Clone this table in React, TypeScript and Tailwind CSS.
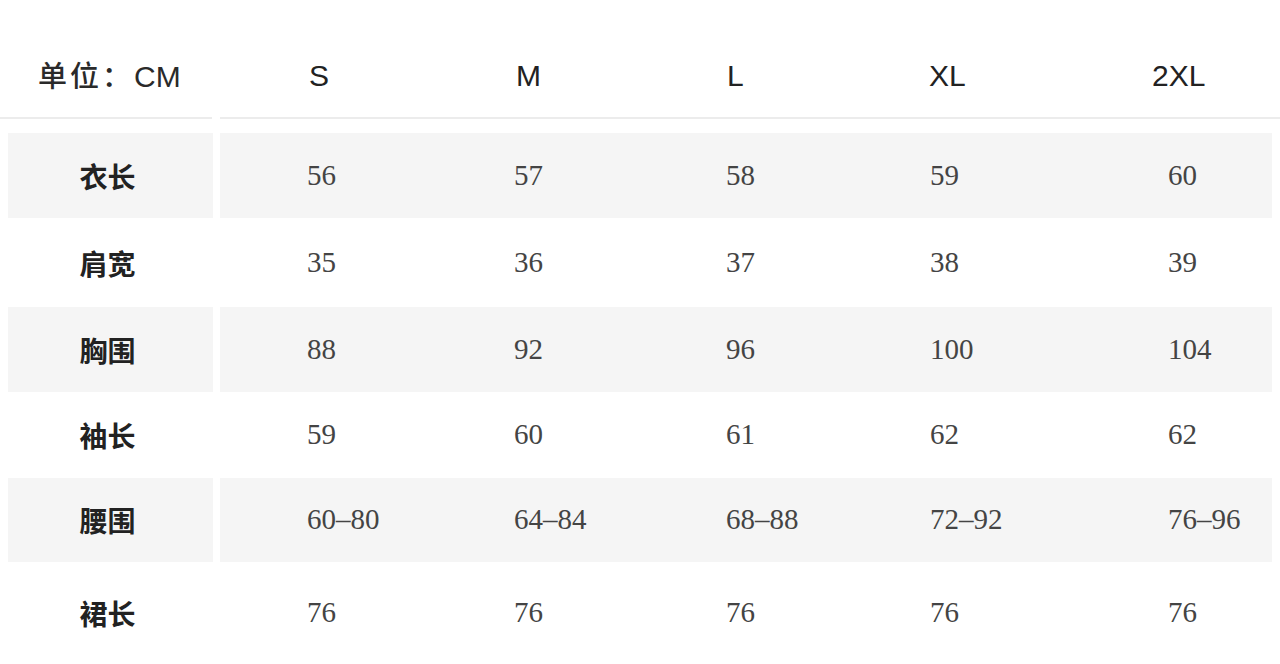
const sizes = ['S', 'M', 'L', 'XL', '2XL']

const rows: { label: string; values: string[]; h: string; shaded: boolean }[] = [
  { label: '衣长', values: ['56', '57', '58', '59', '60'], h: 'h-[85px]', shaded: true },
  { label: '肩宽', values: ['35', '36', '37', '38', '39'], h: 'h-[89px]', shaded: false },
  { label: '胸围', values: ['88', '92', '96', '100', '104'], h: 'h-[85px]', shaded: true },
  { label: '袖长', values: ['59', '60', '61', '62', '62'], h: 'h-[86px]', shaded: false },
  { label: '腰围', values: ['60–80', '64–84', '68–88', '72–92', '76–96'], h: 'h-[84px]', shaded: true },
  { label: '裙长', values: ['76', '76', '76', '76', '76'], h: 'h-[102px]', shaded: false },
]

// column widths of the data area, text left aligned inside
const valueCols = ['w-[207px]', 'w-[212px]', 'w-[204px]', 'w-[236px]', 'flex-1']
const headCols = ['w-[207px]', 'w-[211px]', 'w-[202px]', 'w-[223px]', 'flex-1']

const cjk = "font-['Noto_Sans_CJK_SC',sans-serif]"

export default function App() {
  return (
    <div className="w-[1280px] h-[664px] bg-white overflow-hidden">
      {/* header */}
      <div className="h-[117px] flex items-center pt-[34px]">
        <div className={`w-[220px] pl-[38px] text-[29px] font-medium text-[#2a2a2a] ${cjk}`}>
          <span className="tracking-[3px]">单位：</span>
          <span className="font-['Liberation_Sans',sans-serif] text-[30px]">CM</span>
        </div>
        <div className="flex flex-1 pl-[89px] font-['Liberation_Sans',sans-serif] text-[30px] text-[#222]">
          {sizes.map((s, i) => (
            <div key={s} className={headCols[i]}>
              {s}
            </div>
          ))}
        </div>
      </div>
      <div className="flex gap-[8px] h-[2px]">
        <div className="w-[212px] bg-[#ececec]" />
        <div className="flex-1 bg-[#ececec]" />
      </div>

      <div className="mt-[14px]">
        {rows.map((r) => (
          <div key={r.label} className={`flex gap-[7px] ${r.h}`}>
            <div
              className={`w-[205px] ml-[8px] flex items-center justify-center text-[28px] font-bold text-[#222] ${cjk} ${
                r.shaded ? 'bg-[#f5f5f5]' : ''
              }`}
            >
              <span className="mr-[6px]">{r.label}</span>
            </div>
            <div
              className={`w-[1052px] flex items-center pl-[87px] font-['Liberation_Serif',serif] text-[29px] text-[#444] ${
                r.shaded ? 'bg-[#f5f5f5]' : ''
              }`}
            >
              {r.values.map((v, i) => (
                <div key={i} className={`${valueCols[i]} ${i === 4 ? 'pl-[2px]' : ''}`}>
                  {v}
                </div>
              ))}
            </div>
          </div>
        ))}
      </div>
    </div>
  )
}
